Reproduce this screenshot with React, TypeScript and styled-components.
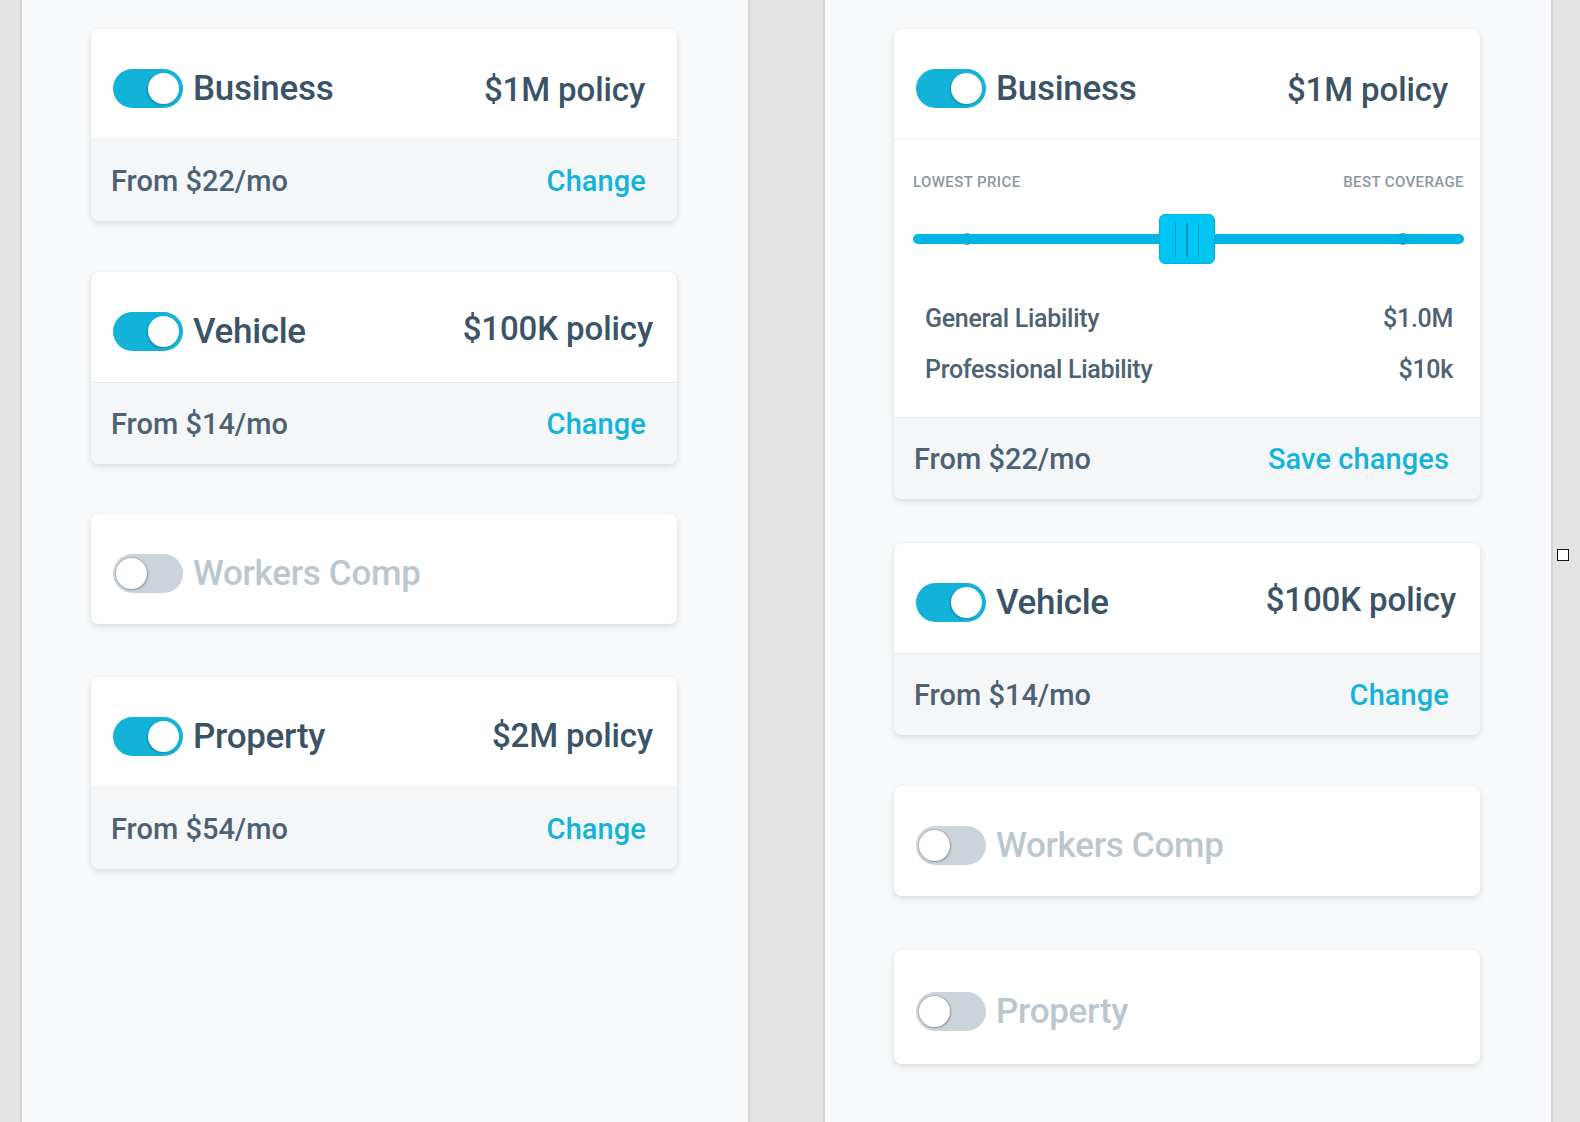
import React from 'react'
import styled, { createGlobalStyle } from 'styled-components'

const GlobalStyle = createGlobalStyle`
    html, body {
        margin: 0;
        padding: 0;
        background: #e3e3e3;
        font-family: Roboto, 'Liberation Sans', Arial, sans-serif;
        -webkit-font-smoothing: antialiased;
    }
`

const Canvas = styled.div`
    position: relative;
    display: flex;
    gap: 73px;
    padding-left: 20px;
    height: 1122px;
    overflow: hidden;
`
const Panel = styled.div`
    width: 730px;
    height: 100%;
    box-sizing: border-box;
    background: #f7f9fa;
    border-left: 2px solid #d3d3d3;
    border-right: 2px solid #d3d3d3;
    padding: 29px 0 0 69px;
`
const Stack = styled.div`
    display: flex;
    flex-direction: column;
`
const Card = styled.div<{ $top: number }>`
    width: 586px;
    margin-top: ${(p) => p.$top}px;
    border-radius: 8px;
    background: #ffffff;
    box-shadow: 0 3px 6px rgba(40, 55, 70, 0.13), 0 0 2px rgba(40, 55, 70, 0.06);
    overflow: hidden;
`
const Header = styled.div<{ $right: number; $height: number }>`
    height: ${(p) => p.$height}px;
    box-sizing: border-box;
    display: flex;
    align-items: center;
    padding: 9px ${(p) => p.$right}px 0 22px;
`
const Toggle = styled.div<{ $on: boolean }>`
    position: relative;
    flex: none;
    width: 70px;
    height: 39px;
    border-radius: 20px;
    background: ${(p) => (p.$on ? '#13b2d8' : '#ccd3da')};
    &::after {
        content: '';
        position: absolute;
        top: 4px;
        left: ${(p) => (p.$on ? '35px' : '3px')};
        width: 31px;
        height: 31px;
        border-radius: 50%;
        background: #ffffff;
        box-shadow: ${(p) =>
            p.$on
                ? '-1px 1px 2px rgba(0, 60, 80, 0.35)'
                : '0 0 0 1px rgba(120, 130, 140, 0.35), 1px 1px 2px rgba(60, 70, 80, 0.35)'};
    }
`
const Title = styled.span<{ $on: boolean }>`
    margin-left: 10px;
    font-size: 35px;
    font-weight: 500;
    letter-spacing: -0.3px;
    color: ${(p) => (p.$on ? '#3b5366' : '#bcc6ce')};
`
const PolicyText = styled.span<{ $lift: number }>`
    margin-left: auto;
    margin-bottom: ${(p) => p.$lift * 2}px;
    font-size: 33px;
    font-weight: 500;
    letter-spacing: -0.1px;
    color: #3b5366;
`
const Footer = styled.div`
    height: 82px;
    box-sizing: border-box;
    display: flex;
    align-items: center;
    justify-content: space-between;
    padding: 0 31px 0 20px;
    background: #f4f6f8;
    border-top: 1px solid #e7eaed;
`
const Price = styled.span`
    font-size: 29px;
    font-weight: 500;
    color: #4c6274;
`
const Action = styled.span`
    font-size: 29px;
    font-weight: 500;
    letter-spacing: 0.1px;
    color: #14b3d8;
`
const Body = styled.div`
    padding: 34px 16px 32px 19px;
    border-top: 1px solid #eef0f2;
`
const ScaleLabels = styled.div`
    display: flex;
    justify-content: space-between;
    font-size: 15px;
    line-height: 16px;
    font-weight: 500;
    letter-spacing: 0.4px;
    color: #8a97a2;
    text-transform: uppercase;
`
const Slider = styled.div`
    position: relative;
    height: 50px;
    margin-top: 24px;
    display: flex;
    align-items: center;
`
const Track = styled.div`
    width: 100%;
    height: 10px;
    border-radius: 5px;
    background: #00b5e6;
`
const Stop = styled.div<{ $at: number }>`
    position: absolute;
    top: 19px;
    left: ${(p) => p.$at}px;
    width: 12px;
    height: 12px;
    border-radius: 50%;
    background: #00b0e0;
`
const Thumb = styled.div`
    position: absolute;
    top: 0;
    left: 246px;
    width: 56px;
    height: 50px;
    box-sizing: border-box;
    border-radius: 6px;
    background: #00c4f2;
    border: 1px solid #00b2e2;
    display: flex;
    justify-content: center;
    align-items: center;
    gap: 10px;
`
const Grip = styled.div`
    width: 1.5px;
    height: 34px;
    margin-top: 2px;
    background: #0a98c2;
`
const CoverRows = styled.div`
    display: flex;
    flex-direction: column;
    gap: 21px;
    margin-top: 40px;
    padding: 0 11px 0 12px;
`
const CoverRow = styled.div`
    display: flex;
    justify-content: space-between;
    font-size: 25px;
    line-height: 30px;
    font-weight: 500;
    letter-spacing: -0.3px;
    color: #4d6273;
`
const Handle = styled.div`
    position: absolute;
    left: 1557px;
    top: 549px;
    width: 12px;
    height: 12px;
    box-sizing: border-box;
    border: 1.5px solid #111;
    background: #fff;
`

type Policy = {
    name: string
    on: boolean
    top: number
    policy?: string
    price?: string
    right?: number
    lift?: number
    height?: number
}

const left: Policy[] = [
    { name: 'Business', on: true, top: 0, policy: '$1M policy', price: 'From $22/mo', right: 32, lift: -1 },
    { name: 'Vehicle', on: true, top: 51, policy: '$100K policy', price: 'From $14/mo', right: 24, lift: 3 },
    { name: 'Workers Comp', on: false, top: 50 },
    { name: 'Property', on: true, top: 53, policy: '$2M policy', price: 'From $54/mo', right: 24, lift: 1 },
]

const right: Policy[] = [
    { name: 'Vehicle', on: true, top: 44, policy: '$100K policy', price: 'From $14/mo', right: 24, lift: 3 },
    { name: 'Workers Comp', on: false, top: 51 },
    { name: 'Property', on: false, top: 54, height: 114 },
]

const CardHead = ({ item }: { item: Policy }) => (
    <Header $right={item.right ?? 24} $height={item.height ?? 110}>
        <Toggle $on={item.on} />
        <Title $on={item.on}>{item.name}</Title>
        {item.policy && <PolicyText $lift={item.lift ?? 0}>{item.policy}</PolicyText>}
    </Header>
)

const PolicyCard = ({ item }: { item: Policy }) => (
    <Card $top={item.top}>
        <CardHead item={item} />
        {item.price && (
            <Footer>
                <Price>{item.price}</Price>
                <Action>Change</Action>
            </Footer>
        )}
    </Card>
)

const EditingCard = () => (
    <Card $top={0}>
        <CardHead
            item={{ name: 'Business', on: true, top: 0, policy: '$1M policy', right: 32, lift: -1 }}
        />
        <Body>
            <ScaleLabels>
                <span>Lowest price</span>
                <span>Best coverage</span>
            </ScaleLabels>
            <Slider>
                <Track />
                <Stop $at={48} />
                <Stop $at={484} />
                <Thumb>
                    <Grip />
                    <Grip />
                    <Grip />
                </Thumb>
            </Slider>
            <CoverRows>
                <CoverRow>
                    <span>General Liability</span>
                    <span>$1.0M</span>
                </CoverRow>
                <CoverRow>
                    <span>Professional Liability</span>
                    <span>$10k</span>
                </CoverRow>
            </CoverRows>
        </Body>
        <Footer>
            <Price>From $22/mo</Price>
            <Action>Save changes</Action>
        </Footer>
    </Card>
)

const App = () => {
    return (
        <>
            <GlobalStyle />
            <Canvas>
                <Panel>
                    <Stack>
                        {left.map((item) => (
                            <PolicyCard key={item.name} item={item} />
                        ))}
                    </Stack>
                </Panel>
                <Panel>
                    <Stack>
                        <EditingCard />
                        {right.map((item) => (
                            <PolicyCard key={item.name} item={item} />
                        ))}
                    </Stack>
                </Panel>
                <Handle />
            </Canvas>
        </>
    )
}

export default App
